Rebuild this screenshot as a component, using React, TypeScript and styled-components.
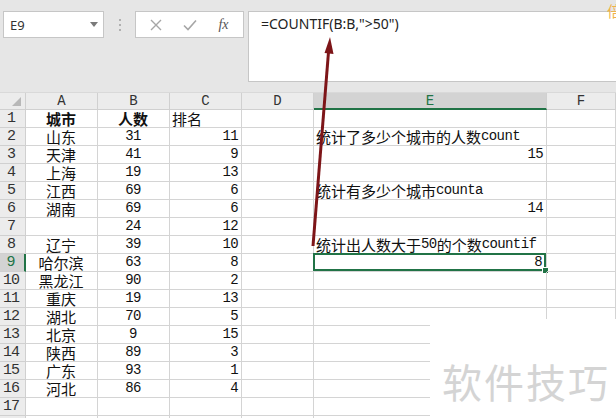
import React from 'react';
import styled, { createGlobalStyle } from 'styled-components';

const GlobalStyle = createGlobalStyle`
  html, body {
    margin: 0;
    padding: 0;
    background: #ffffff;
    overflow: hidden;
  }
`;

const StyledApp = styled.div`
  position: relative;
  width: 616px;
  height: 418px;
  overflow: hidden;
  background: #e6e6e6;
  font-family: 'Noto Sans', 'Liberation Sans', sans-serif;
`;

const TopBar = styled.div`
  display: flex;
  align-items: flex-start;
  height: 93px;
  padding: 11px 0 0 3px;
  box-sizing: border-box;
  border-bottom: 1px solid #d9d9d9;
`;

const NameBox = styled.div`
  display: flex;
  align-items: center;
  justify-content: space-between;
  width: 101px;
  height: 27px;
  box-sizing: border-box;
  padding: 0 5px 0 6px;
  background: #fff;
  border: 1px solid #c6c6c6;
  font-size: 13px;
  color: #333;
`;

const Caret = styled.span`
  width: 0;
  height: 0;
  border-left: 4px solid transparent;
  border-right: 4px solid transparent;
  border-top: 5px solid #7a7a7a;
`;

const Grip = styled.div`
  display: flex;
  flex-direction: column;
  align-items: center;
  justify-content: center;
  gap: 3px;
  width: 31px;
  height: 27px;

  span {
    width: 2px;
    height: 2px;
    background: #b0b0b0;
  }
`;

const ActionBox = styled.div`
  display: flex;
  align-items: center;
  justify-content: space-around;
  width: 109px;
  height: 27px;
  box-sizing: border-box;
  padding: 0 4px;
  background: #fff;
  border: 1px solid #c6c6c6;
  margin-right: 4px;
`;

const Fx = styled.span`
  font-family: 'Liberation Serif', serif;
  font-style: italic;
  font-size: 14px;
  color: #555;
`;

const FormulaBox = styled.div`
  flex: 1;
  height: 71px;
  box-sizing: border-box;
  padding: 2px 12px;
  background: #fff;
  border: 1px solid #c6c6c6;
  border-right: none;
  font-size: 14px;
  color: #222;
`;

const Sheet = styled.div`
  position: relative;
  display: grid;
  grid-template-columns: 26px 72px 72px 72px 72px 233px 1fr;
  grid-auto-rows: 18px;
  grid-template-rows: 17px;
  background: #fff;
`;

const HeadCell = styled.div<{ $active?: boolean }>`
  display: flex;
  align-items: center;
  justify-content: center;
  box-sizing: border-box;
  background: ${(p) => (p.$active ? '#d3d3d3' : '#ececec')};
  border-right: 1px solid #d0d0d0;
  border-bottom: ${(p) => (p.$active ? '2px solid #217346' : '1px solid #d0d0d0')};
  font-family: 'Liberation Mono', monospace;
  font-size: 14px;
  color: ${(p) => (p.$active ? '#217346' : '#333')};
`;

const Corner = styled(HeadCell)`
  position: relative;

  &::after {
    content: '';
    position: absolute;
    right: 4px;
    bottom: 3px;
    width: 0;
    height: 0;
    border-left: 9px solid transparent;
    border-bottom: 9px solid #b8b8b8;
  }
`;

const RowHead = styled.div<{ $active?: boolean }>`
  display: flex;
  align-items: center;
  justify-content: center;
  padding-right: 3px;
  box-sizing: border-box;
  background: ${(p) => (p.$active ? '#d3d3d3' : '#ececec')};
  border-bottom: 1px solid #d0d0d0;
  border-right: ${(p) => (p.$active ? '2px solid #217346' : '1px solid #d0d0d0')};
  font-family: 'Liberation Mono', monospace;
  font-size: 15px;
  letter-spacing: -1px;
  line-height: 17px;
  color: ${(p) => (p.$active ? '#217346' : '#333')};
`;

const Cell = styled.div<{ $align?: 'left' | 'center' | 'right'; $bold?: boolean; $selected?: boolean }>`
  position: relative;
  display: flex;
  align-items: flex-end;
  justify-content: ${(p) =>
    p.$align === 'center' ? 'center' : p.$align === 'right' ? 'flex-end' : 'flex-start'};
  box-sizing: border-box;
  padding: 0 3px 0 2px;
  border-right: 1px solid #d4d4d4;
  border-bottom: 1px solid #d4d4d4;
  font-family: 'Noto Sans CJK SC', sans-serif;
  font-size: 15px;
  line-height: 17px;
  font-weight: ${(p) => (p.$bold ? 700 : 400)};
  color: #111;
  white-space: nowrap;
  box-shadow: ${(p) => (p.$selected ? 'inset 0 0 0 2px #217346' : 'none')};
  ${(p) => (p.$selected ? 'margin: -1px 0 0 -1px; padding-right: 4px;' : '')}
`;

const Handle = styled.span`
  position: absolute;
  right: -3px;
  bottom: -3px;
  width: 5px;
  height: 5px;
  background: #217346;
  border: 1px solid #fff;
`;

const Latin = styled.span`
  font-family: 'Liberation Mono', monospace;
  font-size: 14px;
  letter-spacing: -0.6px;
  font-weight: 400;
`;

const Watermark = styled.div`
  position: absolute;
  left: 430px;
  top: 226px;
  right: 0;
  bottom: 0;
  background: #fff;
  display: flex;
  align-items: center;
  justify-content: center;
  padding: 8px 0 0 6px;
  font-family: 'Noto Sans CJK SC', sans-serif;
  font-size: 40px;
  letter-spacing: 2px;
  color: #d4d4d4;
`;

const CornerMark = styled.div`
  position: absolute;
  right: -6px;
  top: 0;
  font-family: 'Noto Sans CJK SC', sans-serif;
  font-size: 15px;
  color: #f0b34a;
`;

const Arrow = styled.svg`
  position: absolute;
  left: 0;
  top: 0;
  pointer-events: none;
`;

const mixed = (text: string) =>
  text.split(/([\x00-\x7f]+)/).map((part, i) =>
    i % 2 === 1 ? <Latin key={i}>{part}</Latin> : part
  );

type Row = {
  a?: string;
  b?: string;
  c?: string;
  e?: string;
  eRight?: boolean;
  head?: boolean;
};

const rows: Row[] = [
  { a: '城市', b: '人数', c: '排名', head: true },
  { a: '山东', b: '31', c: '11', e: '统计了多少个城市的人数count' },
  { a: '天津', b: '41', c: '9', e: '15', eRight: true },
  { a: '上海', b: '19', c: '13' },
  { a: '江西', b: '69', c: '6', e: '统计有多少个城市counta' },
  { a: '湖南', b: '69', c: '6', e: '14', eRight: true },
  { a: '', b: '24', c: '12' },
  { a: '辽宁', b: '39', c: '10', e: '统计出人数大于50的个数countif' },
  { a: '哈尔滨', b: '63', c: '8', e: '8', eRight: true },
  { a: '黑龙江', b: '90', c: '2' },
  { a: '重庆', b: '19', c: '13' },
  { a: '湖北', b: '70', c: '5' },
  { a: '北京', b: '9', c: '15' },
  { a: '陕西', b: '89', c: '3' },
  { a: '广东', b: '93', c: '1' },
  { a: '河北', b: '86', c: '4' },
  {},
  {},
];

const columns = ['A', 'B', 'C', 'D', 'E', 'F'];

const App: React.FC = () => {
  return (
    <StyledApp>
      <GlobalStyle />
      <TopBar>
        <NameBox>
          E9
          <Caret />
        </NameBox>
        <Grip>
          <span />
          <span />
          <span />
        </Grip>
        <ActionBox>
          <svg width="12" height="12" viewBox="0 0 12 12">
            <path d="M1 1L11 11M11 1L1 11" stroke="#a6a6a6" strokeWidth="1.4" />
          </svg>
          <svg width="14" height="12" viewBox="0 0 14 12">
            <path d="M1 6.5L5 10.5L13 1.5" stroke="#a6a6a6" strokeWidth="1.6" fill="none" />
          </svg>
          <Fx>fx</Fx>
        </ActionBox>
        <FormulaBox>=COUNTIF(B:B,"&gt;50")</FormulaBox>
      </TopBar>
      <Sheet>
        <Corner />
        {columns.map((c) => (
          <HeadCell key={c} $active={c === 'E'}>
            {c}
          </HeadCell>
        ))}
        {rows.map((r, i) => {
          const n = i + 1;
          const sel = n === 9;
          return (
            <React.Fragment key={n}>
              <RowHead $active={sel}>{n < 18 ? n : ''}</RowHead>
              <Cell $align="center" $bold={r.head}>
                {r.a}
              </Cell>
              <Cell $align="center" $bold={r.head}>
                {r.head ? r.b : r.b && <Latin>{r.b}</Latin>}
              </Cell>
              <Cell $align={r.head ? 'left' : 'right'}>
                {r.head ? r.c : r.c && <Latin>{r.c}</Latin>}
              </Cell>
              <Cell />
              <Cell $align={r.eRight ? 'right' : 'left'} $selected={sel}>
                {r.e && mixed(r.e)}
                {sel && <Handle />}
              </Cell>
              <Cell />
            </React.Fragment>
          );
        })}
        <Watermark>软件技巧</Watermark>
      </Sheet>
      <CornerMark>倍</CornerMark>
      <Arrow width="616" height="418">
        <line x1="313" y1="246" x2="328.5" y2="52" stroke="#7d1518" strokeWidth="3" />
        <polygon points="330,37 324.5,53 333.5,54" fill="#7d1518" />
      </Arrow>
    </StyledApp>
  );
};

export default App;
